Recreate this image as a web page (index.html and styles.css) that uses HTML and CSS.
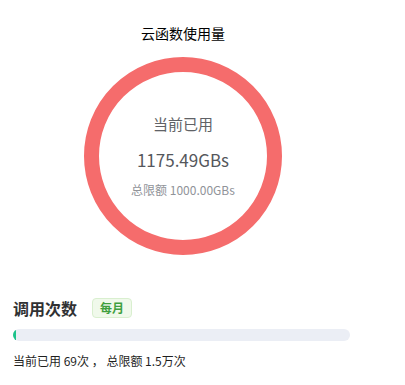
FILE: index.html
```html
<!DOCTYPE html>
<html lang="zh-CN">
<head>
    <meta charset="UTF-8">
    <meta name="viewport" content="width=device-width, initial-scale=1.0">
    <title>云函数使用量</title>
    <link rel="stylesheet" href="styles.css">
</head>
<body>

<div id="panel">
    <div class="usage">
        <div class="usage-title">云函数使用量</div>
        <div class="ring">
            <div class="ring-label">当前已用</div>
            <div class="ring-value">1175.49GBs</div>
            <div class="ring-limit">总限额 1000.00GBs</div>
        </div>
    </div>

    <div class="calls">
        <div class="calls-head">
            <span class="calls-title">调用次数</span>
            <span class="tag">每月</span>
        </div>
        <div class="bar">
            <div class="bar-fill" style="width: 0.46%"></div>
        </div>
        <div class="calls-text">当前已用 69次 ， 总限额 1.5万次</div>
    </div>
</div>

</body>
</html>
```

FILE: styles.css
```css
body {
    font-family: "Noto Sans CJK SC", "Noto Sans", sans-serif;
    background-color: #ffffff;
    color: #303133;
    margin: 0;
}
#panel {
    padding: 23px 0 0 13px;
}
.usage {
    width: 340px;
    display: flex;
    flex-direction: column;
    align-items: center;
}
.usage-title {
    font-size: 14px;
    line-height: 20px;
    color: #000000;
}
.ring {
    width: 198px;
    height: 198px;
    margin-top: 14px;
    box-sizing: border-box;
    border: 15px solid #f56c6c;
    border-radius: 50%;
    display: flex;
    flex-direction: column;
    align-items: center;
    justify-content: center;
}
.ring-label {
    font-size: 15px;
    line-height: 20px;
    color: #606266;
}
.ring-value {
    font-size: 17px;
    line-height: 24px;
    margin-top: 14px;
    color: #55575c;
}
.ring-limit {
    font-size: 12px;
    line-height: 16px;
    margin-top: 10px;
    color: #909399;
}
.calls {
    margin-top: 41px;
    width: 337px;
}
.calls-head {
    display: flex;
    align-items: center;
    height: 24px;
}
.calls-title {
    font-size: 16px;
    font-weight: bold;
    color: #303133;
}
.tag {
    margin-left: 15px;
    height: 20px;
    line-height: 18px;
    padding: 0 7px;
    box-sizing: border-box;
    font-size: 12px;
    font-weight: bold;
    color: #3f9f3f;
    background-color: #f0f9eb;
    border: 1px solid #d9efcf;
    border-radius: 4px;
}
.bar {
    margin-top: 9px;
    height: 12px;
    border-radius: 6px;
    background-color: #ebeef5;
    overflow: hidden;
}
.bar-fill {
    min-width: 3px;
    height: 100%;
    border-radius: 6px;
    background-color: #1cc38a;
}
.calls-text {
    margin-top: 12px;
    font-size: 12px;
    line-height: 16px;
    color: #1f1f1f;
}
```
